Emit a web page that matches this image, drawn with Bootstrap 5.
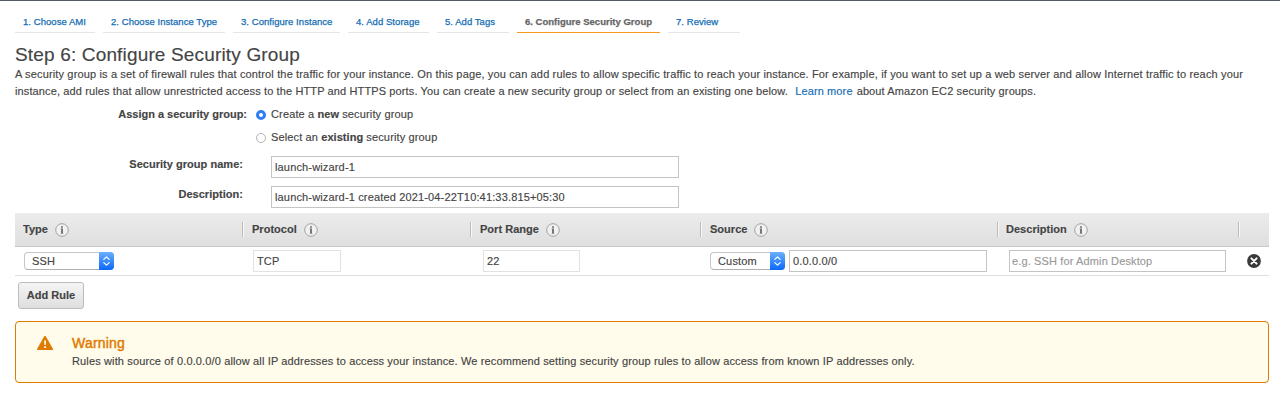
<!DOCTYPE html>
<html lang="en">
<head>
<meta charset="utf-8">
<meta name="viewport" content="width=device-width, initial-scale=1">
<title>Configure Security Group</title>
<link href="https://cdn.jsdelivr.net/npm/bootstrap@5.3.0/dist/css/bootstrap.min.css" rel="stylesheet">
<style>
  body { font: 11px/17px "Liberation Sans", Arial, sans-serif; color: #444; letter-spacing: .14px; background: #fff; -webkit-text-stroke: .15px; }
  b, .wiz-label, .col-title, .btn-rule { font-weight: 700; letter-spacing: .03px; }
  a { color: #146eb4; text-decoration: none; }
  .page-top { border-top: 1px solid #545b64; padding: 9px 11px 0 15px; height: 400px; }
  .wizard { gap: 8px; height: 23px; }
  .wizard .nav-link { padding: 3px 8px 0; font-size: 9.5px; line-height: 17px; letter-spacing: .055px; color: #146eb4; border-bottom: 1px solid #e5e5e5; height: 23px; -webkit-text-stroke: .25px; white-space: nowrap; }
  .wizard .nav-link.active { color: #666; font-weight: 700; letter-spacing: .012px; border-color: #f7981f; }
  h1 { font-size: 19px; line-height: 24px; letter-spacing: .16px; margin: 10px 0 -1px; font-weight: 400; }
  .intro { height: 34px; white-space: nowrap; letter-spacing: .148px; }
  .intro div + div { letter-spacing: .122px; }
  .wiz-form { display: grid; grid-template-columns: 228px 408px; column-gap: 28px; padding-top: 3px; }
  .wiz-label { text-align: right; padding-top: 8px; }
  .wiz-label.choice { padding-top: 3px; margin-right: -4px; letter-spacing: -.01px; }
  .wiz-label.first { padding-top: 7px; }
  .wiz-form .field { margin-top: 8px; }
  .wiz-form .field.first { margin-top: 7px; }
  .radio-row { height: 23px; gap: 5px; margin-left: -15px; }
  .dot { width: 10px; height: 10px; border: 1px solid #b5b5b5; border-radius: 50%; background: #fff; flex: none; }
  .dot.on { border: 3px solid #2f7df6; }
  .field { height: 22px; border: 1px solid #c4c4c4; border-radius: 0; padding: 0 3px; font: inherit; letter-spacing: .155px; color: #444; background: #fff; display: block; min-width: 0; -webkit-text-stroke: inherit; }
  .field::placeholder { color: #999; opacity: 1; }
  .field.hint { padding-left: 2px; letter-spacing: .13px; }
  .field.fixed { border-color: #e2e2e2; }
  .rules-head, .rules-row { display: grid; grid-template-columns: 227px 228px 230px 297px 241px 31px; }
  .rules-head { height: 34px; background: linear-gradient(#ececec, #dfdfdf); border-bottom: 1px solid #c9c9c9; align-items: center; }
  .rules-head > div { height: 15px; padding-left: 9px; gap: 7px; border-left: 1px solid #bbb; box-shadow: inset 1px 0 #f8f8f8; }
  .rules-head > div:first-child { border: 0; box-shadow: none; padding-left: 8px; }
  .rules-row { height: 29px; border-bottom: 1px solid #ddd; align-items: center; }
  .pick { height: 18px; border: 1px solid #c6c6c6; border-bottom-color: #b0b0b0; border-radius: 4px; padding-left: 7px; letter-spacing: .16px; }
  .stepper { width: 15px; height: 18px; margin: -1px; border-radius: 0 4px 4px 0; background: linear-gradient(#6bb0fb, #0a68fb); flex: none; }
  .btn-rule { width: 66px; height: 27px; padding: 0; margin: 6px 0 0 3px; font-size: 11px; line-height: 25px; color: #444; border: 1px solid #bcbcbc; border-radius: 3px; background: linear-gradient(#f5f5f5, #dedede); -webkit-text-stroke: inherit; }
  .caution { margin: 12px 0 0; height: 62px; padding: 13px 0 0 21px; gap: 18px; border: 1px solid #df7b00; border-radius: 4px; background: #fffceb; color: #444; }
  .caution h2 { font-size: 14px; line-height: 18px; letter-spacing: .2px; color: #df7b00; margin: -1px 0 1px; font-weight: 400; -webkit-text-stroke: .45px; }
  svg { display: block; flex: none; }
</style>
</head>
<body>
<svg width="0" height="0" class="position-absolute" aria-hidden="true">
  <symbol id="info" viewBox="0 0 14 14"><circle cx="7" cy="7" r="6.3" fill="#f1f1f1" stroke="#999" stroke-width=".9"/><path d="M6.3 3.3h1.4v1.4H6.3zM6.3 5.6h1.4v5H6.3z" fill="#444"/><path d="M5.6 5.6h.8v.7h-.8zM5.6 10h2.8v.6H5.6z" fill="#777"/></symbol>
  <symbol id="updown" viewBox="0 0 15 18"><path d="M4.8 7.4 7.5 4.9l2.7 2.5M4.8 10.6l2.7 2.5 2.7-2.5" fill="none" stroke="#fff" stroke-width="1.2" stroke-linecap="round" stroke-linejoin="round"/></symbol>
</svg>
<main class="page-top">
  <nav class="nav wizard flex-nowrap">
    <a class="nav-link" style="width:80px" href="#">1. Choose AMI</a>
    <a class="nav-link" style="width:122px" href="#">2. Choose Instance Type</a>
    <a class="nav-link" style="width:107px" href="#">3. Configure Instance</a>
    <a class="nav-link" style="width:81px" href="#">4. Add Storage</a>
    <a class="nav-link" style="width:72px" href="#">5. Add Tags</a>
    <a class="nav-link active" style="width:143px" href="#">6. Configure Security Group</a>
    <a class="nav-link" style="width:72px" href="#">7. Review</a>
  </nav>
  <h1>Step 6: Configure Security Group</h1>
  <div class="intro">
    <div>A security group is a set of firewall rules that control the traffic for your instance. On this page, you can add rules to allow specific traffic to reach your instance. For example, if you want to set up a web server and allow Internet traffic to reach your</div>
    <div>instance, add rules that allow unrestricted access to the HTTP and HTTPS ports. You can create a new security group or select from an existing one below. <a href="#" class="px-1">Learn more</a>about Amazon EC2 security groups.</div>
  </div>
  <div class="wiz-form">
    <div class="wiz-label choice">Assign a security group:</div>
    <div>
      <div class="radio-row d-flex align-items-center"><span class="dot on"></span><span>Create a <b>new</b> security group</span></div>
      <div class="radio-row d-flex align-items-center"><span class="dot"></span><span>Select an <b>existing</b> security group</span></div>
    </div>
    <div class="wiz-label first">Security group name:</div>
    <input class="field first w-100" value="launch-wizard-1">
    <div class="wiz-label">Description:</div>
    <input class="field w-100" value="launch-wizard-1 created 2021-04-22T10:41:33.815+05:30">
  </div>
  <section style="margin-top:5px">
    <div class="rules-head col-title">
      <div class="d-flex align-items-center">Type <svg width="14" height="14"><use href="#info"/></svg></div>
      <div class="d-flex align-items-center">Protocol <svg width="14" height="14"><use href="#info"/></svg></div>
      <div class="d-flex align-items-center">Port Range <svg width="14" height="14"><use href="#info"/></svg></div>
      <div class="d-flex align-items-center">Source <svg width="14" height="14"><use href="#info"/></svg></div>
      <div class="d-flex align-items-center" style="padding-left:8px">Description <svg width="14" height="14"><use href="#info"/></svg></div>
      <div></div>
    </div>
    <div class="rules-row">
      <div class="pick d-flex align-items-center justify-content-between" style="width:90px;margin-left:9px">SSH<span class="stepper"><svg width="15" height="18"><use href="#updown"/></svg></span></div>
      <input class="field fixed" style="width:88px;margin-left:11px" value="TCP" readonly>
      <input class="field fixed" style="width:97px;margin-left:13px" value="22" readonly>
      <div class="d-flex align-items-center" style="padding-left:10px;gap:4px">
        <div class="pick d-flex align-items-center justify-content-between" style="width:75px">Custom<span class="stepper"><svg width="15" height="18"><use href="#updown"/></svg></span></div>
        <input class="field" style="width:198px" value="0.0.0.0/0">
      </div>
      <input class="field hint" style="width:217px;margin-left:12px" placeholder="e.g. SSH for Admin Desktop">
      <svg width="14" height="14" viewBox="0 0 14 14" style="margin-left:9px"><circle cx="7" cy="7" r="6.9" fill="#3a3a3a"/><path d="m4.4 4.4 5.2 5.2m0-5.2L4.4 9.6" stroke="#fff" stroke-width="2" stroke-linecap="round"/></svg>
    </div>
    <button class="btn btn-rule d-block">Add Rule</button>
  </section>
  <div class="caution d-flex align-items-start" role="alert">
    <svg width="17" height="16" viewBox="0 0 17 16"><path d="M8 .8q.6 0 .9.6l7 12.4q.5 1.1-.6 1.3H.8q-1.2-.2-.6-1.3L7.1 1.4q.3-.6.9-.6z" fill="#df7b00"/><path d="M7.1 5.4h2l-.3 4.5H7.4zM7.2 11.2h1.8V13H7.2z" fill="#fffceb"/></svg>
    <div><h2>Warning</h2><div class="text-nowrap" style="letter-spacing:.135px">Rules with source of 0.0.0.0/0 allow all IP addresses to access your instance. We recommend setting security group rules to allow access from known IP addresses only.</div></div>
  </div>
</main>
<script src="https://cdn.jsdelivr.net/npm/bootstrap@5.3.0/dist/js/bootstrap.bundle.min.js"></script>
</body>
</html>
